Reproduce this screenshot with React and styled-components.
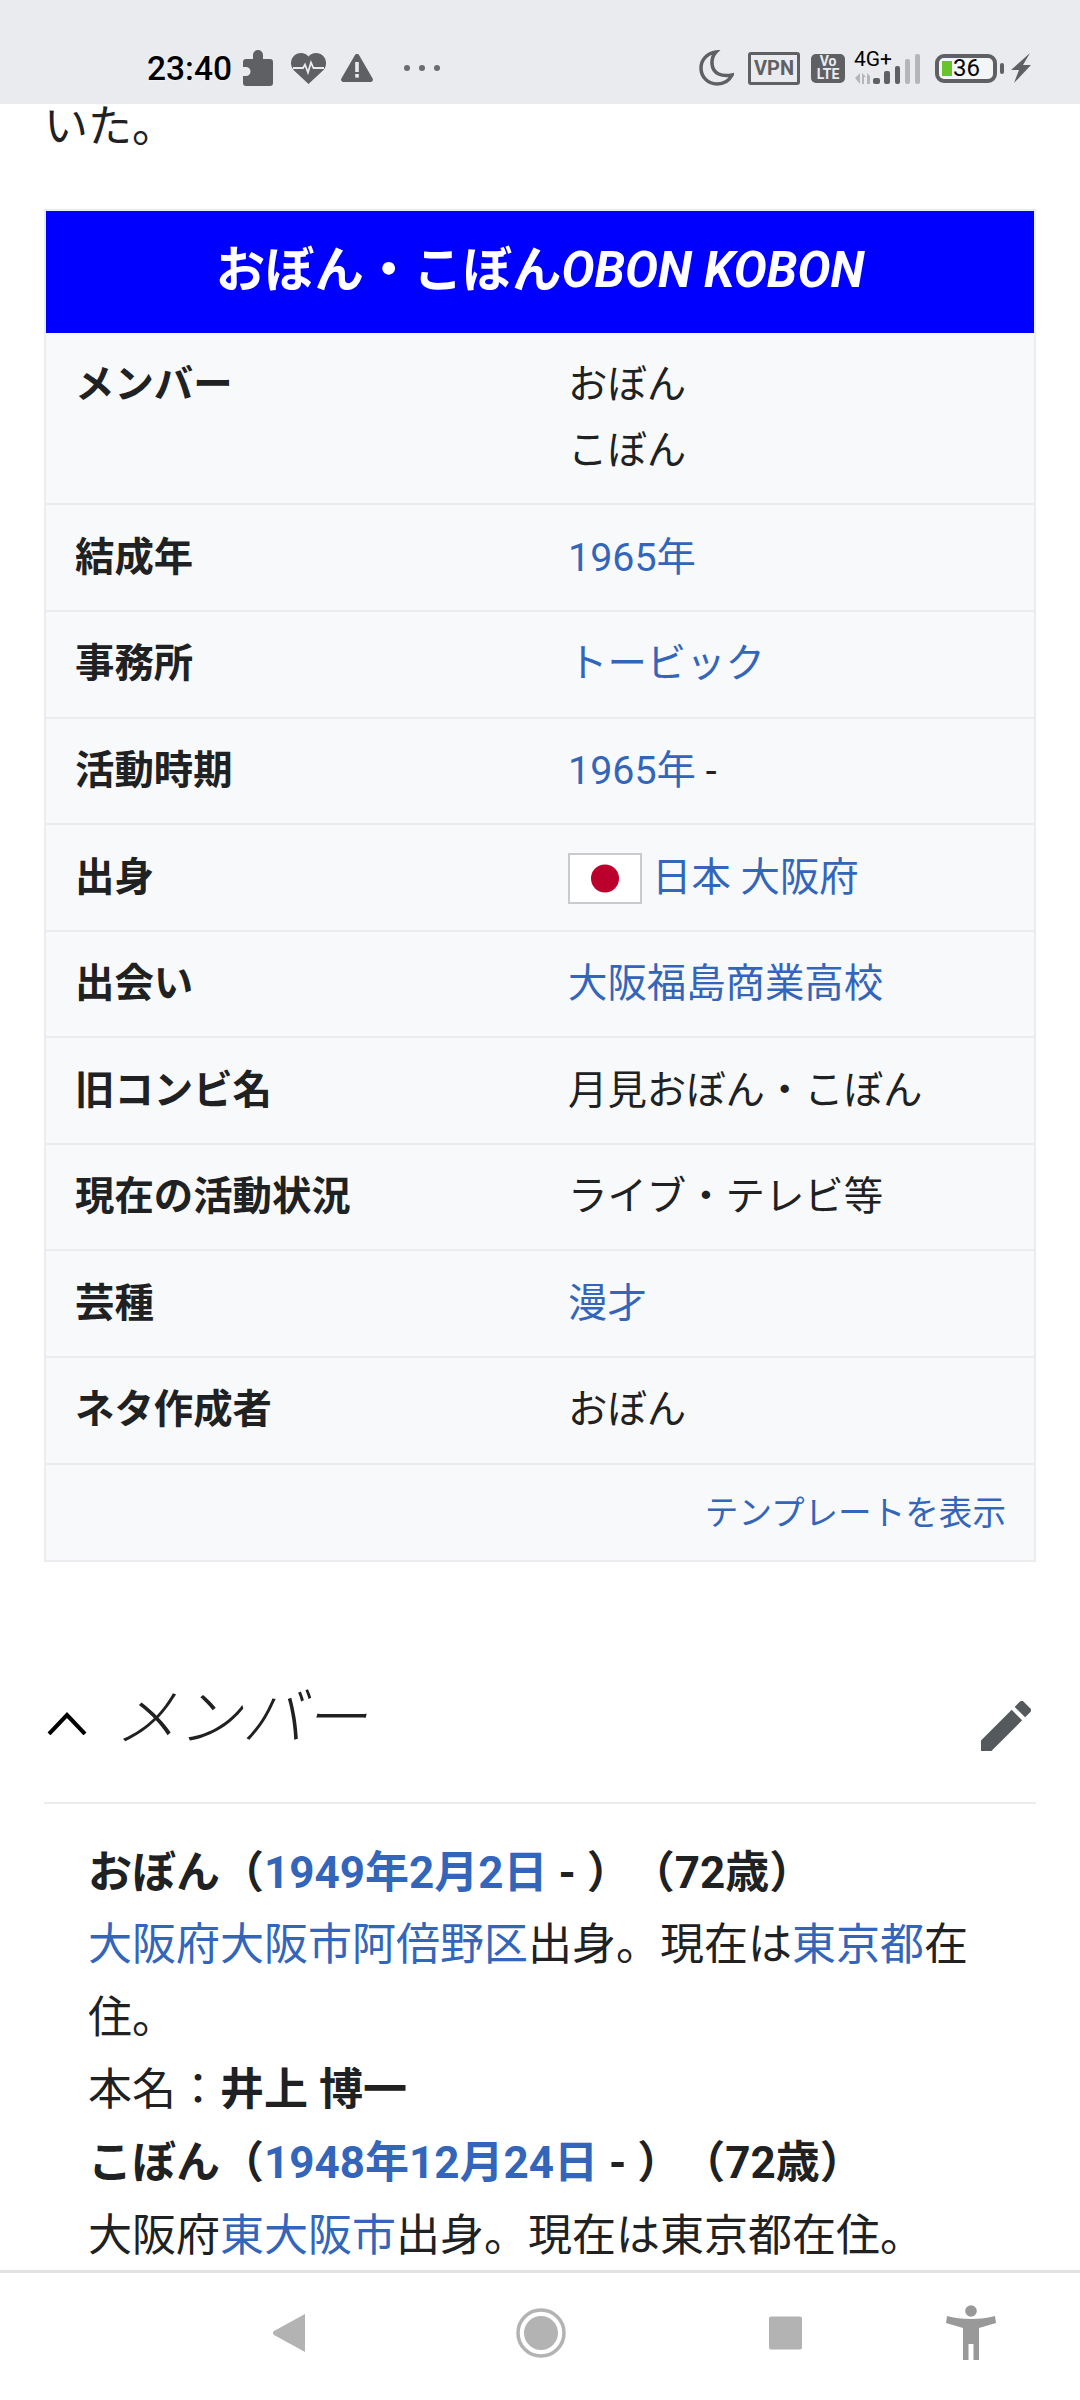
import styled, { createGlobalStyle } from 'styled-components'

const rows = [
  { label: 'メンバー', value: ['おぼん', 'こぼん'] },
  { label: '結成年', link: '1965年' },
  { label: '事務所', link: 'トービック' },
  { label: '活動時期', link: '1965年', after: ' -' },
  { label: '出身', link: '日本 大阪府', flag: true },
  { label: '出会い', link: '大阪福島商業高校' },
  { label: '旧コンビ名', value: ['月見おぼん・こぼん'] },
  { label: '現在の活動状況', value: ['ライブ・テレビ等'] },
  { label: '芸種', link: '漫才' },
  { label: 'ネタ作成者', value: ['おぼん'] },
]

export default function App() {
  return (
    <Screen>
      <GlobalStyle />
      <StatusBar>
        <Time>23:40</Time>
        <IconSlot $w={30} $ml={11}>
          <svg width="30" height="36" viewBox="0 0 30 36">
            <path fill="#5f6064" d="M3 9h7V5a5 5 0 0 1 10 0v4h7a3 3 0 0 1 3 3v21a3 3 0 0 1-3 3H3a3 3 0 0 1-3-3v-7h3a4 4 0 0 0 0-9H0v-5a3 3 0 0 1 3-3z" />
          </svg>
        </IconSlot>
        <IconSlot $w={35} $ml={18}>
          <svg width="35" height="31" viewBox="0 0 35 31">
            <path fill="#5f6064" d="M17.5 31 3 17.5A9.5 9.5 0 0 1 0 10.5 10 10 0 0 1 10 0c3 0 5.800 1.300 7.500 3.500C19.200 1.300 22 0 25 0a10 10 0 0 1 10 10.500c0 2.600-1 5-3 7z" />
            <path fill="none" stroke="#e9ebee" strokeWidth="1.800" d="M2 15h10l2-3.500 3 8 3-10 2.500 5.500H33" />
          </svg>
        </IconSlot>
        <IconSlot $w={32} $ml={15}>
          <svg width="32" height="28" viewBox="0 0 32 28">
            <path fill="#5f6064" d="M16 0c1 0 1.800.5 2.300 1.400l13.300 23.200c.9 1.600 0 3.400-2 3.400H2.400c-2 0-2.900-1.800-2-3.400L13.700 1.400C14.200.5 15 0 16 0z" />
            <rect x="14.200" y="8" width="3.600" height="10" fill="#e9ebee" />
            <rect x="14.200" y="20" width="3.600" height="3.600" fill="#e9ebee" />
          </svg>
        </IconSlot>
        <Dots>
          <span />
          <span />
          <span />
        </Dots>
        <RightIcons>
          <svg width="35" height="36" viewBox="0 0 35 36">
            <path fill="none" stroke="#5f6064" strokeWidth="3.500" d="M17 2C8 3 2 10 2 18c0 9 7 16 16 16 7 0 12-3 15-9-10 2-19-1-20-11-.3-5 1-9 4-12z" />
          </svg>
          <VpnBadge>VPN</VpnBadge>
          <VolteBadge>
            <span>Vo</span>
            <span>LTE</span>
          </VolteBadge>
          <Network>
            <NetworkLabel>4G+</NetworkLabel>
            <svg width="67" height="30" viewBox="0 0 67 30">
              <path fill="#b4b6b8" d="M1 24l5-5v11zM8 19l0 11h2v-7h2zM13 19v11h3v-8z" />
              <rect x="19" y="24" width="7" height="6" rx="2" fill="#5f6064" />
              <rect x="30" y="17" width="6" height="13" rx="2" fill="#5f6064" />
              <rect x="41" y="12" width="5" height="18" rx="2" fill="#5f6064" />
              <rect x="51" y="5" width="5" height="25" rx="2" fill="#b4b6b8" />
              <rect x="61" y="0" width="5" height="30" rx="2" fill="#b4b6b8" />
            </svg>
          </Network>
          <Battery>
            <BatteryFill />
            <BatteryValue>36</BatteryValue>
            <BatteryNub />
          </Battery>
          <svg width="20" height="30" viewBox="0 0 20 30">
            <path fill="#5f6064" d="M19 0 0 17h8L3 30l17-18h-8z" />
          </svg>
        </RightIcons>
      </StatusBar>

      <Content>
        <Intro>いた。</Intro>
        <Infobox>
          <InfoTitle>
            <TitleKana>おぼん・こぼん</TitleKana>
            <TitleLatin>OBON KOBON</TitleLatin>
          </InfoTitle>
          {rows.map((r) => (
            <InfoRow key={r.label}>
              <RowLabel>{r.label}</RowLabel>
              <RowValue>
                {r.flag && (
                  <Flag>
                    <svg width="70" height="47" viewBox="0 0 70 47">
                      <circle cx="35" cy="23.500" r="14" fill="#bc002d" />
                    </svg>
                  </Flag>
                )}
                {r.link && <Link>{r.link}</Link>}
                {r.after}
                {r.value && r.value.map((v) => <div key={v}>{v}</div>)}
              </RowValue>
            </InfoRow>
          ))}
          <TemplateRow>
            <Link>テンプレートを表示</Link>
          </TemplateRow>
        </Infobox>

        <SectionHead>
          <svg width="40" height="24" viewBox="0 0 40 24">
            <path fill="none" stroke="#000" strokeWidth="4" d="M2 23 20 4l18 19" />
          </svg>
          <SectionTitle>メンバー</SectionTitle>
          <svg width="50" height="50" viewBox="3 3 18 18">
            <path fill="#54595d" d="M3 17.250V21h3.750L17.810 9.940l-3.750-3.750L3 17.250zM20.710 7.040a1 1 0 0 0 0-1.410l-2.340-2.340a1 1 0 0 0-1.410 0l-1.830 1.830 3.750 3.750 1.830-1.830z" />
          </svg>
        </SectionHead>

        <Members>
          <div>
            <b>おぼん（</b>
            <BoldLink>1949年2月2日</BoldLink>
            <b> - ）（72歳）</b>
          </div>
          <div>
            <Link>大阪府大阪市阿倍野区</Link>出身。現在は<Link>東京都</Link>在住。
          </div>
          <div>
            本名：<b>井上 博一</b>
          </div>
          <div>
            <b>こぼん（</b>
            <BoldLink>1948年12月24日</BoldLink>
            <b> - ）（72歳）</b>
          </div>
          <div>
            大阪府<Link>東大阪市</Link>出身。現在は東京都在住。
          </div>
        </Members>
      </Content>

      <NavBar>
        <NavItem $x={273}>
          <svg width="32" height="38" viewBox="0 0 32 38">
            <path fill="#b3b3b3" d="M32 0v38L1 21a2.500 2.500 0 0 1 0-4z" />
          </svg>
        </NavItem>
        <NavItem $x={516}>
          <svg width="50" height="50" viewBox="0 0 50 50">
            <circle cx="25" cy="25" r="23" fill="none" stroke="#b3b3b3" strokeWidth="3.500" />
            <circle cx="25" cy="25" r="17" fill="#b3b3b3" />
          </svg>
        </NavItem>
        <NavItem $x={769}>
          <StopSquare />
        </NavItem>
        <NavItem $x={946}>
          <svg width="50" height="56" viewBox="0 0 50 56">
            <circle cx="25" cy="6" r="5.800" fill="#999" />
            <path fill="#999" d="M1 11c13 4 35 4 48 0l1 7-17 5v32h-5.500V39h-5v16H17V23L0 18z" />
          </svg>
        </NavItem>
      </NavBar>
    </Screen>
  )
}

const GlobalStyle = createGlobalStyle`
  html, body {
    margin: 0;
    background: #fff;
  }
  * {
    box-sizing: border-box;
  }
`

const Screen = styled.div`
  width: 1080px;
  height: 2400px;
  display: flex;
  flex-direction: column;
  overflow: hidden;
  color: #202122;
  font-family: Roboto, "Noto Sans CJK JP", sans-serif;
  text-spacing-trim: space-all;
`

const StatusBar = styled.div`
  flex: 0 0 104px;
  display: flex;
  align-items: center;
  padding: 32px 49px 0 147px;
  background: #e9ebee;
`

const Time = styled.span`
  font-size: 33.500px;
  font-weight: 500;
  color: #000;
  text-shadow: 0 0 2px #fff;
`

const IconSlot = styled.span`
  display: flex;
  width: ${(p) => p.$w}px;
  margin-left: ${(p) => p.$ml}px;
`

const Dots = styled.span`
  display: flex;
  gap: 9px;
  margin-left: 31px;

  span {
    width: 6px;
    height: 6px;
    border-radius: 50%;
    background: #6b6c70;
  }
`

const RightIcons = styled.div`
  margin-left: auto;
  display: flex;
  align-items: center;
  gap: 14px;
`

const VpnBadge = styled.span`
  width: 52px;
  height: 33px;
  display: flex;
  align-items: center;
  justify-content: center;
  border: 3.500px solid #5f6064;
  border-radius: 3px;
  font-size: 20px;
  font-weight: 700;
  color: #5f6064;
`

const VolteBadge = styled.span`
  width: 34px;
  height: 29px;
  display: flex;
  flex-direction: column;
  align-items: center;
  justify-content: center;
  margin-left: -3px;
  background: #5f6064;
  border-radius: 5px;
  color: #e9ebee;
  font-size: 14px;
  font-weight: 700;
  line-height: 13px;
`

const Network = styled.span`
  position: relative;
  width: 67px;
  height: 32px;
  margin-left: -5px;
  display: flex;
  align-items: flex-end;
`

const NetworkLabel = styled.span`
  position: absolute;
  left: 0;
  top: -4px;
  font-size: 21px;
  line-height: 22px;
  color: #000;
`

const Battery = styled.span`
  position: relative;
  width: 62px;
  height: 29px;
  display: flex;
  align-items: center;
  gap: 1px;
  padding-left: 3px;
  border: 4px solid #5f6064;
  border-radius: 9px;
  background: #f4f5f6;
`

const BatteryFill = styled.span`
  width: 10px;
  height: 15px;
  background: #69c32c;
`

const BatteryValue = styled.span`
  font-size: 24px;
  line-height: 21px;
  color: #000;
`

const BatteryNub = styled.span`
  position: absolute;
  right: -11px;
  top: 5px;
  width: 4px;
  height: 11px;
  border-radius: 2px;
  background: #5f6064;
`

const Content = styled.div`
  flex: 1;
  min-height: 0;
  padding: 0 44px;
  overflow: hidden;
`

const Intro = styled.div`
  font-size: 44px;
  line-height: 46px;
`

const Infobox = styled.div`
  margin-top: 59px;
  border: 2px solid #eaecf0;
  background: #f8f9fa;
`

const InfoTitle = styled.div`
  height: 122px;
  display: flex;
  align-items: center;
  justify-content: center;
  padding-bottom: 5px;
  background: #0000ff;
  color: #fff;
  font-size: 49.400px;
  font-weight: 700;
`

const TitleKana = styled.span`
  transform: translateY(-4px);
`

const TitleLatin = styled.i`
  font-style: italic;
`

const InfoRow = styled.div`
  display: grid;
  grid-template-columns: 493px 1fr;
  padding: 19.400px 30px 19.400px 29px;
  border-bottom: 2px solid #eaecf0;
  font-size: 39.400px;
  line-height: 65.800px;
`

const RowLabel = styled.div`
  font-weight: 700;
`

const RowValue = styled.div``

const Flag = styled.span`
  display: inline-flex;
  vertical-align: middle;
  margin: -4px 10px 0 0;
  border: 2px solid #c8ccd1;
  background: #fff;

  svg {
    display: block;
  }
`

const Link = styled.span`
  color: #3366bb;
`

const BoldLink = styled.b`
  color: #3366bb;
`

const TemplateRow = styled.div`
  height: 95px;
  display: flex;
  align-items: center;
  justify-content: flex-end;
  padding: 0 28px 4px 0;
  font-size: 33.600px;
`

const SectionHead = styled.div`
  display: flex;
  align-items: flex-start;
  margin-top: 104px;
  height: 138px;
  padding: 0 5px 0 3px;
  border-bottom: 2px solid #eaecf0;

  svg {
    margin-top: 45px;
  }

  svg:last-child {
    margin-top: 35px;
  }
`

const SectionTitle = styled.h2`
  flex: 1;
  margin: 9px 0 0 28px;
  font-size: 63px;
  line-height: 88px;
  font-weight: 300;
  font-style: italic;
`

const Members = styled.div`
  padding: 33px 0 0 44px;
  font-size: 44px;
  line-height: 72.600px;
`

const NavBar = styled.div`
  position: relative;
  flex: 0 0 130px;
  border-top: 3px solid #e2e2e2;
  background: #fff;
`

const NavItem = styled.div`
  position: absolute;
  left: ${(p) => p.$x}px;
  top: calc(50% - 4px);
  transform: translateY(-50%);
  display: flex;
`

const StopSquare = styled.span`
  width: 33px;
  height: 33px;
  border-radius: 2px;
  background: #b3b3b3;
`
